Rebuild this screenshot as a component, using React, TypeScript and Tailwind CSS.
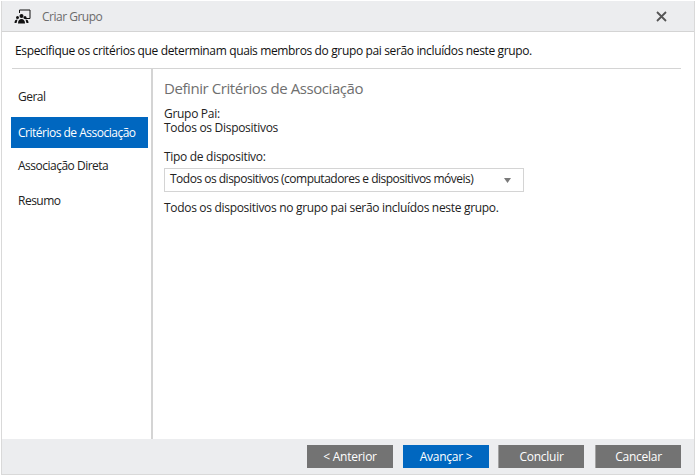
const navItems = ['Geral', 'Critérios de Associação', 'Associação Direta', 'Resumo'];

function GroupIcon() {
  return (
    <svg width="17" height="15" viewBox="0 0 17 15" fill="none">
      <path d="M5.5 4V1h10.5V9.5H11" stroke="#111" strokeWidth="1" />
      <circle cx="7.5" cy="7" r="2" fill="#111" />
      <circle cx="3.5" cy="8.5" r="1.5" fill="#111" />
      <circle cx="11" cy="8.5" r="1.5" fill="#111" />
      <path d="M4 14.5c0-3 1.4-4.5 3.5-4.5s3.5 1.5 3.5 4.5z" fill="#111" />
      <path d="M0.5 14c0-2.5 1-3.6 3-3.6l-1 3.6z" fill="#111" />
      <path d="M11.5 10.4c2 0 3 1.1 3 3.6h-2z" fill="#111" />
    </svg>
  );
}

function FooterButton({ label, className }: { label: string; className: string }) {
  return <button className={`w-[86px] h-[23px] text-white text-[12px] leading-[22px] ${className}`}>{label}</button>;
}

export default function App() {
  return (
    <div className="w-[696px] h-[476px] bg-white p-[1px] flex flex-col font-['Open_Sans',sans-serif] text-[12px] text-[#222] tracking-[-0.25px]">
      <div className="flex-1 flex flex-col border-l border-r border-[#d9d9d9] min-h-0">
        <header className="h-[31px] shrink-0 bg-[#ecedef] border-b border-[#d4d4d4] flex items-center pt-[1px] pl-[12px] pr-[27px]">
          <GroupIcon />
          <span className="ml-[11px] text-[#6b6b6b] tracking-[-0.5px]">Criar Grupo</span>
          <svg className="ml-auto" width="11" height="11" viewBox="0 0 11 11">
            <path d="M1 1l9 9M10 1l-9 9" stroke="#555" strokeWidth="1.8" />
          </svg>
        </header>

        <p className="h-[36px] shrink-0 flex items-center pt-[2px] pl-[13px] text-[#111] tracking-[-0.36px]">
          Especifique os critérios que determinam quais membros do grupo pai serão incluídos neste grupo.
        </p>

        <div className="flex-1 flex min-h-0 ml-[10px] mr-[13px] border-t border-[#d4d4d4]">
          <nav className="w-[141px] shrink-0 border-r-2 border-[#d4d4d4] pt-[10px] tracking-[-0.5px]">
            {navItems.map((item, i) => (
              <div
                key={item}
                className={`w-[137px] flex items-center pl-[7px] ${
                  i === 1 ? '-ml-[1px] bg-[#0067c0] h-[31px] text-white mt-[3px]' : 'h-[35px] -ml-[1px] text-[#222]'
                }`}
              >
                {item}
              </div>
            ))}
          </nav>
          <main className="flex-1 pl-[11px] pt-[9px]">
            <h2 className="text-[15px] leading-[20px] text-[#6f6f6f] tracking-[-0.43px]">Definir Critérios de Associação</h2>
            <div className="mt-[9px] leading-[14px] tracking-[-0.3px]">
              <div>Grupo Pai:</div>
              <div>Todos os Dispositivos</div>
            </div>
            <div className="mt-[14px] leading-[16px] tracking-[-0.3px]">Tipo de dispositivo:</div>
            <div className="mt-[3px] w-[360px] h-[24px] border border-[#d4d4d4] flex items-center pl-[5px] pr-[12px] pb-[2px]">
              <span className="tracking-[-0.5px]">Todos os dispositivos (computadores e dispositivos móveis)</span>
              <svg className="ml-auto mt-[2px]" width="7" height="5" viewBox="0 0 7 5">
                <path d="M0 0h7L3.5 5z" fill="#7a7a7a" />
              </svg>
            </div>
            <p className="mt-[8px] leading-[16px] tracking-[-0.31px]">Todos os dispositivos no grupo pai serão incluídos neste grupo.</p>
          </main>
        </div>

        <footer className="h-[36px] shrink-0 bg-[#ecedef] border-b border-[#d9d9d9] flex items-start justify-end pt-[6px] pr-[13px]">
          <FooterButton label="< Anterior" className="bg-[#737373]" />
          <FooterButton label="Avançar >" className="ml-[10px] bg-[#0067c0]" />
          <FooterButton label="Concluir" className="ml-[9px] bg-[#737373] border-l border-[#a3a3a3]" />
          <FooterButton label="Cancelar" className="ml-[11px] bg-[#737373] border-l border-[#a3a3a3]" />
        </footer>
      </div>
    </div>
  );
}
